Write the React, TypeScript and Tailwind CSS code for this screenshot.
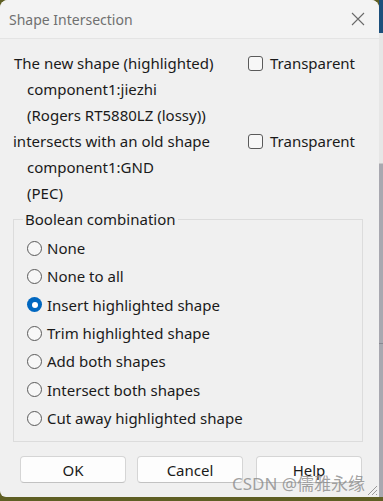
import React from "react";

const font = { fontFamily: '"Noto Sans", "Noto Sans CJK SC", sans-serif' };

function Checkbox() {
  return <span className="inline-block w-[15px] h-[15px] rounded-[3px] border border-[#5a5a5a] bg-[#f7f7f7] shrink-0" />;
}

function Radio({ checked }: { checked?: boolean }) {
  if (checked) {
    return (
      <span className="w-[15px] h-[15px] rounded-full bg-[#0067c0] flex items-center justify-center shrink-0">
        <span className="w-[6px] h-[6px] rounded-full bg-white" />
      </span>
    );
  }
  return <span className="w-[15px] h-[15px] rounded-full border border-[#5a5a5a] bg-[#f7f7f7] shrink-0" />;
}

const options = [
  "None",
  "None to all",
  "Insert highlighted shape",
  "Trim highlighted shape",
  "Add both shapes",
  "Intersect both shapes",
  "Cut away highlighted shape",
];

export default function App() {
  return (
    <div className="w-[383px] h-[501px] flex flex-col overflow-hidden bg-[#5f5f24]" style={font}>
      <div className="flex h-[497px]">
        <div className="relative w-[379px] h-full bg-[#f0f0f0] rounded-t-[8px] rounded-bl-[6px] flex flex-col text-[15px] text-[#1a1a1a] overflow-hidden">
          <div className="h-[39px] shrink-0 flex items-center justify-between pl-[9px] pr-[14px] bg-[#f3f3f3] border-b border-[#e4e4e4]">
            <span className="text-[#707070] text-[14px]">Shape Intersection</span>
            <svg width="14" height="14" viewBox="0 0 14 14">
              <path d="M1 1 L13 13 M13 1 L1 13" stroke="#6a6a6a" strokeWidth="1.1" />
            </svg>
          </div>

          <div className="pt-[11px] flex flex-col leading-[26px]">
            <div className="flex items-center h-[26px]">
              <span className="pl-[14px] w-[248px]">The new shape (highlighted)</span>
              <Checkbox />
              <span className="ml-[7px]">Transparent</span>
            </div>
            <div className="h-[26px] pl-[27px]">component1:jiezhi</div>
            <div className="h-[26px] pl-[27px]">(Rogers RT5880LZ (lossy))</div>
            <div className="flex items-center h-[26px]">
              <span className="pl-[13px] w-[248px]">intersects with an old shape</span>
              <Checkbox />
              <span className="ml-[7px]">Transparent</span>
            </div>
            <div className="h-[26px] pl-[27px]">component1:GND</div>
            <div className="h-[26px] pl-[27px]">(PEC)</div>
          </div>

          <fieldset className="mt-[3px] ml-[13px] mr-[16px] border border-[#dcdcdc] pb-[9px]">
            <legend className="ml-[9px] px-[2px] leading-[20px] h-[20px]">Boolean combination</legend>
            <div className="pt-[5px] flex flex-col">
              {options.map((o, i) => (
                <div key={o} className="h-[28.33px] flex items-center pl-[13px] gap-[5px]">
                  <Radio checked={i === 2} />
                  <span>{o}</span>
                </div>
              ))}
            </div>
          </fieldset>

          <div className="mt-[14px] flex pl-[20px]">
            <button className="w-[106px] h-[27px] rounded-[4px] bg-[#fdfdfd] border border-[#d5d5d5] border-b-[#c2c2c2] flex items-center justify-center">OK</button>
            <button className="ml-[11px] w-[106px] h-[27px] rounded-[4px] bg-[#fdfdfd] border border-[#d5d5d5] border-b-[#c2c2c2] flex items-center justify-center">Cancel</button>
            <button className="ml-[13px] w-[106px] h-[27px] rounded-[4px] bg-[#fdfdfd] border border-[#d5d5d5] border-b-[#c2c2c2] flex items-center justify-center">Help</button>
          </div>

          <div className="absolute left-[232px] top-[473px] text-[17px] leading-[22px] text-[#8a8a8a]/80 whitespace-nowrap">CSDN @儒雅永缘</div>
          <svg className="absolute right-[1px] bottom-[1px]" width="13" height="13" viewBox="0 0 13 13">
            <path d="M12 3 L3 12 M12 7 L7 12 M12 11 L11 12" stroke="#9a9a9a" strokeWidth="1" />
          </svg>
        </div>
        <div className="w-[4px] flex flex-col">
          <div className="h-[33px] bg-[#1c4f7c]" />
          <div className="h-[131px] bg-[#e6e6e6] border-b border-[#c8c8c8]" />
          <div className="h-[180px] bg-[#a8a8b0] border-b border-[#888890]" />
          <div className="flex-1 bg-[#a8a8b0]" />
        </div>
      </div>
    </div>
  );
}
